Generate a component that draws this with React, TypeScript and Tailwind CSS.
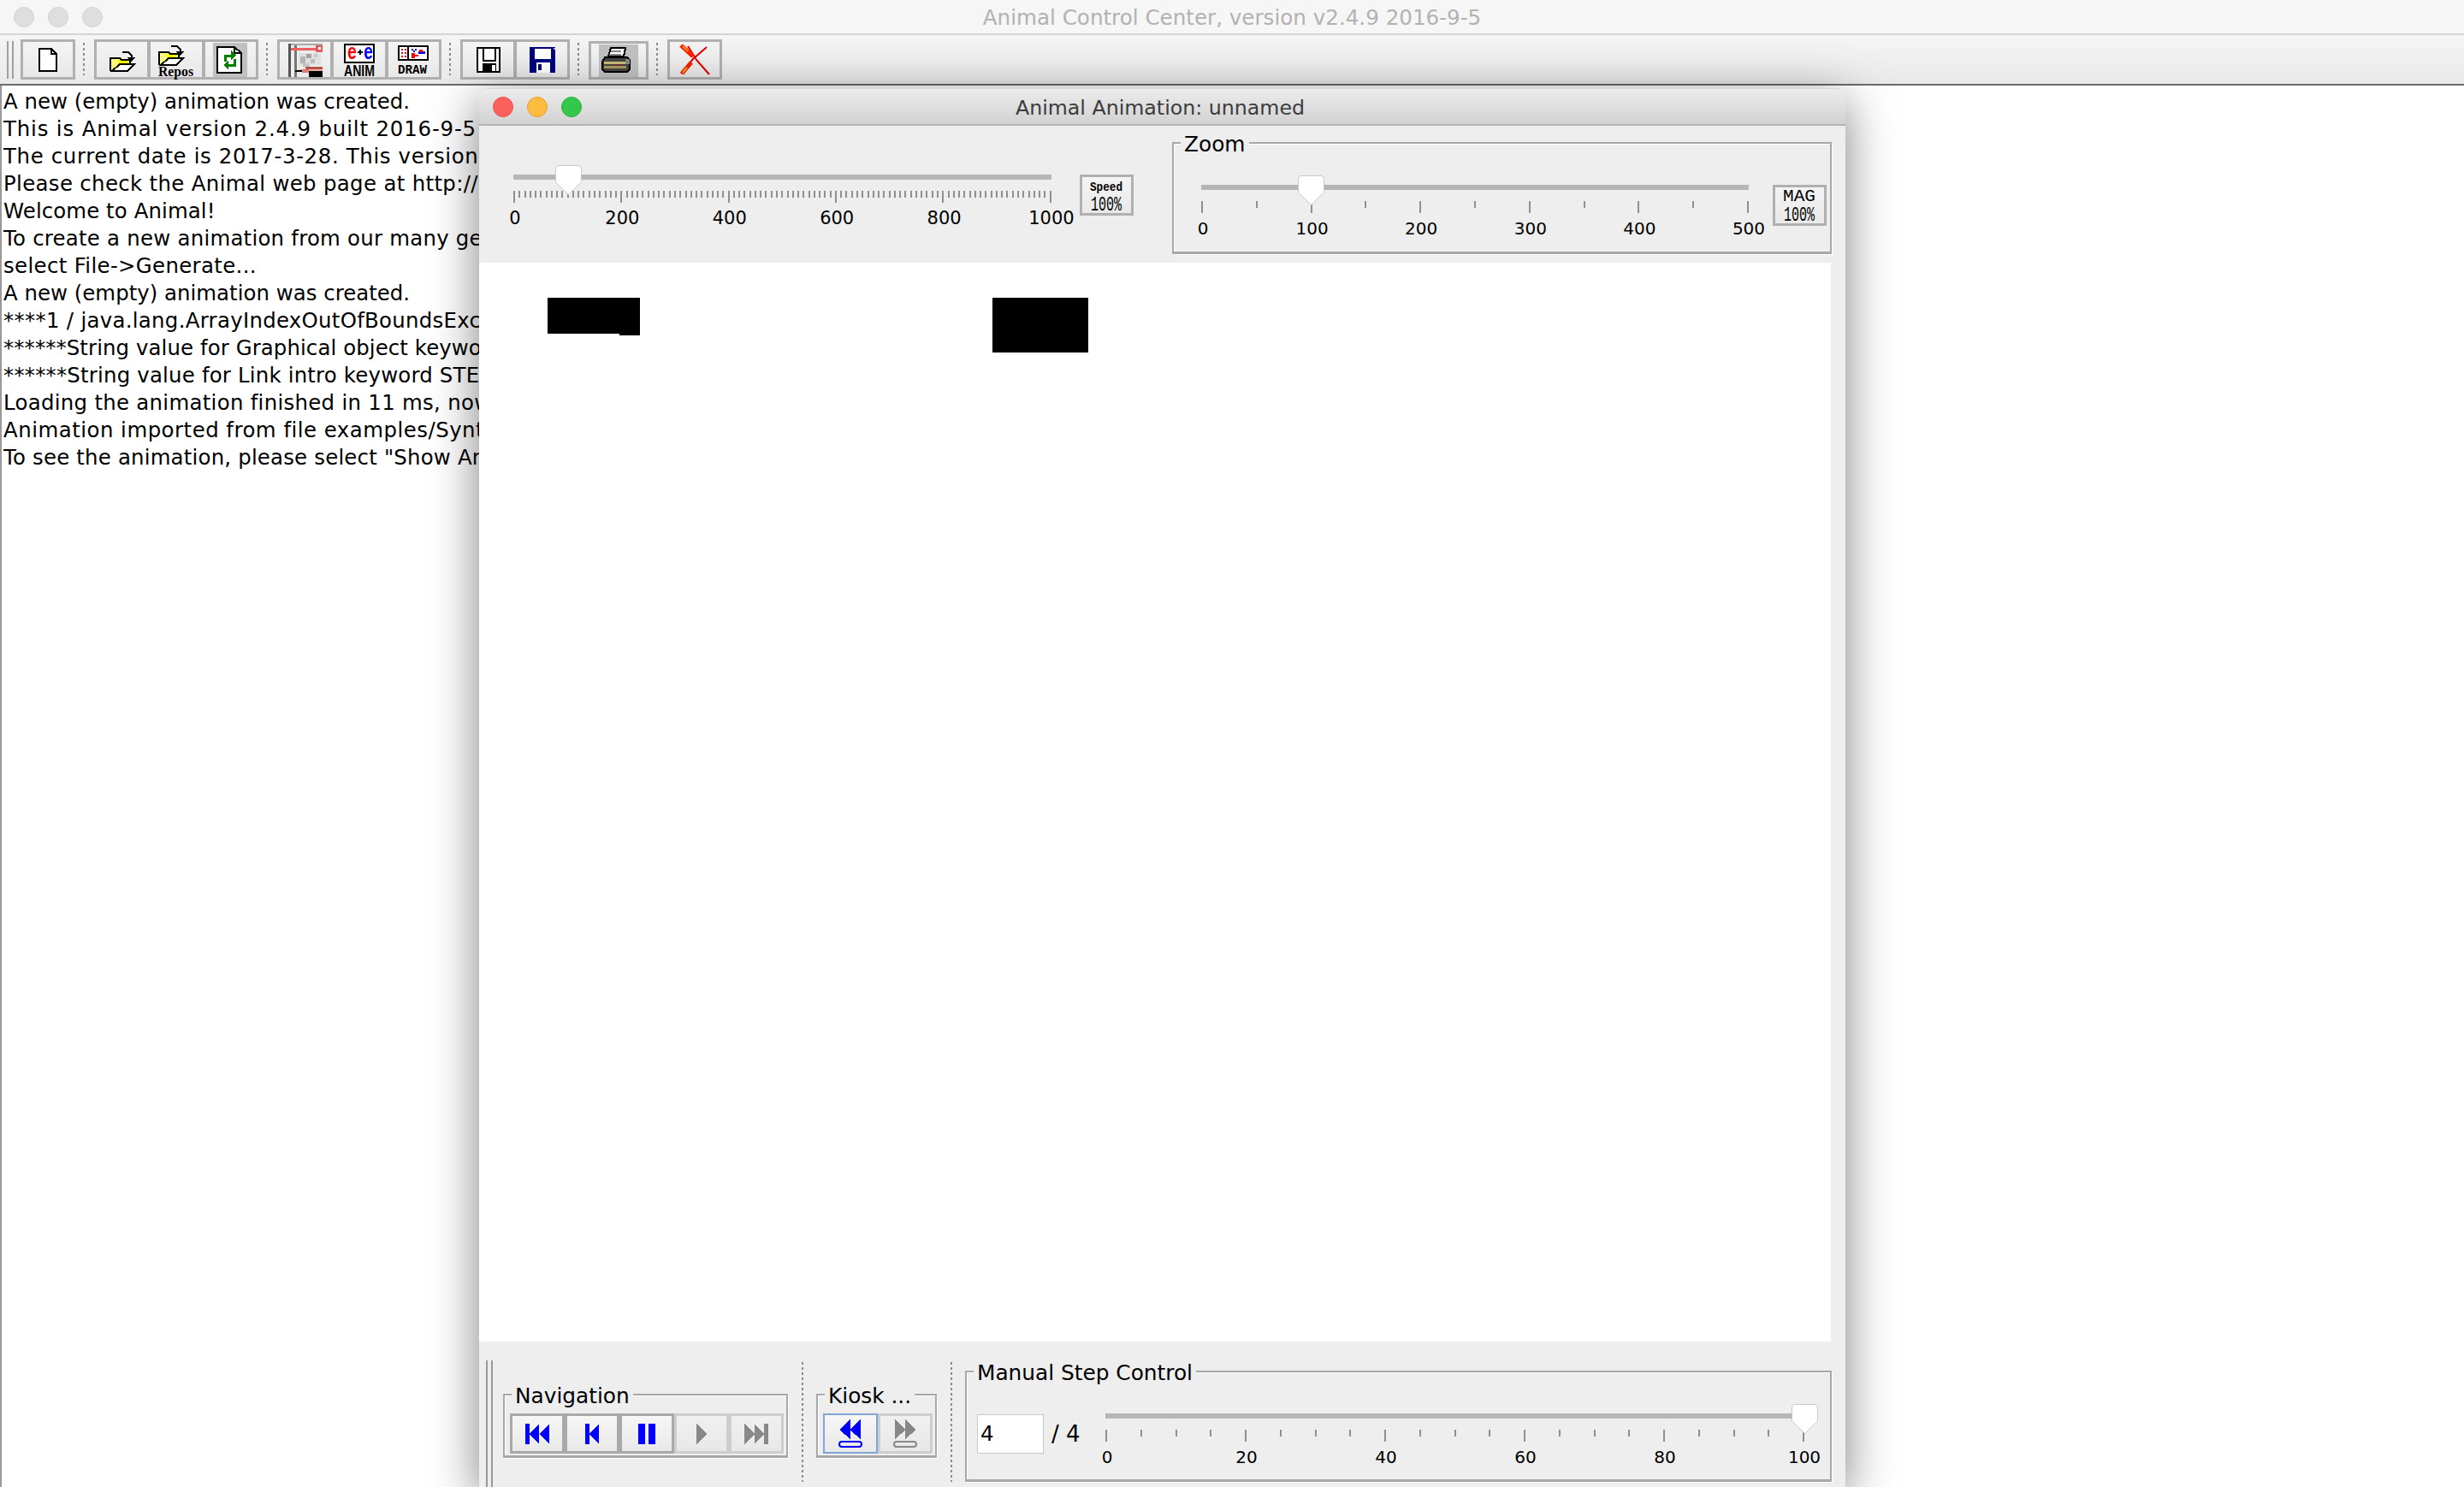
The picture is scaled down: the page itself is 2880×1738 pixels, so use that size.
import type { ReactNode } from 'react'

const logLines = [
  { text: 'A new (empty) animation was created.', tracking: 'tracking-[0.03px]' },
  { text: 'This is Animal version 2.4.9 built 2016-9-5', tracking: 'tracking-[0.85px]' },
  { text: 'The current date is 2017-3-28. This version', tracking: 'tracking-[0.65px]' },
  { text: 'Please check the Animal web page at http://', tracking: 'tracking-[0.35px]' },
  { text: 'Welcome to Animal!', tracking: 'tracking-[0.1px]' },
  { text: 'To create a new animation from our many generators', tracking: 'tracking-[0.25px]' },
  { text: 'select File->Generate...', tracking: 'tracking-[0.35px]' },
  { text: 'A new (empty) animation was created.', tracking: 'tracking-[0.03px]' },
  { text: '****1 / java.lang.ArrayIndexOutOfBoundsException', tracking: 'tracking-[0.3px]' },
  { text: '******String value for Graphical object keyword', tracking: 'tracking-[0.1px]' },
  { text: '******String value for Link intro keyword STEP', tracking: 'tracking-[0.2px]' },
  { text: 'Loading the animation finished in 11 ms, now', tracking: 'tracking-[0.3px]' },
  { text: 'Animation imported from file examples/Syntax', tracking: 'tracking-[0.5px]' },
  { text: 'To see the animation, please select "Show Animation"', tracking: 'tracking-[0.2px]' },
]

function Px({ w, h, className = '', children }: { w: number; h: number; className?: string; children: ReactNode }) {
  return (
    <svg width={w} height={h} viewBox={`0 0 ${w} ${h}`} shapeRendering="crispEdges" className={`overflow-visible ${className}`}>
      {children}
    </svg>
  )
}

function Dither() {
  return (
    <defs>
      <pattern id="yellowDither" width="4" height="4" patternUnits="userSpaceOnUse">
        <rect width="4" height="4" fill="#ffff00" />
        <rect width="2" height="2" fill="#ffffff" />
        <rect x="2" y="2" width="2" height="2" fill="#ffffff" />
      </pattern>
    </defs>
  )
}

function Folder() {
  return (
    <g>
      <path d="M15 5H22L26 9V12" fill="none" stroke="#000" strokeWidth="2" />
      <polygon points="21,11 30,11 25,16" fill="#000" />
      <polygon points="2,13 12,13 14,15 25,15 25,18 12,18 3,26 2,26" fill="url(#yellowDither)" />
      <polygon points="10,14 14,15 24,15 24,17 12,19 10,19" fill="#ffff00" />
      <path d="M1 27V12H12L14 14H24V19" fill="none" stroke="#000" strokeWidth="2" />
      <polygon points="3,27 12,19 29,19 21,27" fill="#fff" stroke="#000" strokeWidth="2" />
    </g>
  )
}

function NewDocIcon() {
  return (
    <Px w={22} h={28}>
      <path d="M1 1H15L21 7V27H1Z" fill="#fff" stroke="#000" strokeWidth="2" />
      <path d="M15 1V7H21" fill="none" stroke="#000" strokeWidth="2" />
    </Px>
  )
}

function OpenIcon() {
  return (
    <Px w={30} h={28}>
      <Dither />
      <Folder />
    </Px>
  )
}

function ReposIcon() {
  return (
    <Px w={42} h={42}>
      <Dither />
      <Folder />
      <text x="0" y="40" fontFamily="'Liberation Serif', serif" fontWeight="700" fontSize="16" textLength="41" lengthAdjust="spacingAndGlyphs">
        Repos
      </text>
    </Px>
  )
}

function RefreshIcon() {
  return (
    <Px w={40} h={40} className="bg-[#c0c0c0]">
      <path d="M5 5H25L33 12V35H5Z" fill="#fff" stroke="#000" strokeWidth="2" />
      <path d="M25 5V12H33" fill="none" stroke="#000" strokeWidth="2" />
      <path d="M14 22V15H22" fill="none" stroke="#008000" strokeWidth="3" />
      <polygon points="21,9 27,15 21,20" fill="#008000" />
      <path d="M25 19V26H17" fill="none" stroke="#008000" strokeWidth="3" />
      <polygon points="18,21 12,26 18,32" fill="#008000" />
    </Px>
  )
}

function ImportIcon() {
  return (
    <Px w={40} h={40} className="bg-[#ececec]">
      <rect x="0" y="1" width="3" height="39" fill="#555" />
      <rect x="7" y="1" width="3" height="39" fill="#777" />
      <rect x="3" y="1" width="37" height="2" fill="#aaa" />
      <rect x="3" y="6" width="30" height="3" fill="#f06060" />
      <rect x="32" y="3" width="8" height="8" fill="#e85a5a" />
      <rect x="35" y="5" width="3" height="3" fill="#fff" />
      <rect x="12" y="12" width="26" height="14" fill="#e0e0e0" />
      <rect x="14" y="16" width="6" height="8" fill="#b4b4b4" />
      <rect x="21" y="13" width="6" height="5" fill="#a4a4a4" />
      <rect x="17" y="24" width="8" height="4" fill="#c4c4c4" />
      <rect x="26" y="19" width="5" height="5" fill="#bcbcbc" />
      <rect x="30" y="13" width="4" height="4" fill="#c8c8c8" />
      <rect x="20" y="28" width="20" height="3" fill="#b9544c" />
      <rect x="12" y="31" width="28" height="2" fill="#e8b0a0" />
      <rect x="16" y="31" width="8" height="4" fill="#e07a70" />
      <rect x="24" y="33" width="16" height="7" fill="#000" />
      <rect x="8" y="32" width="8" height="2" fill="#000" />
    </Px>
  )
}

function AnimIcon() {
  return (
    <Px w={36} h={38}>
      <rect x="1" y="1" width="34" height="21" fill="#fff" stroke="#000" strokeWidth="2" />
      <text x="4" y="18" fontFamily="'Liberation Mono', monospace" fontWeight="700" fontSize="26" fill="#ff0000" textLength="11" lengthAdjust="spacingAndGlyphs">
        e
      </text>
      <rect x="16" y="9" width="6" height="2" fill="#000" />
      <rect x="18" y="7" width="2" height="6" fill="#000" />
      <text x="23" y="18" fontFamily="'Liberation Mono', monospace" fontWeight="700" fontSize="26" fill="#0000ff" textLength="11" lengthAdjust="spacingAndGlyphs">
        e
      </text>
      <text x="0" y="38" fontFamily="'Liberation Sans', sans-serif" fontWeight="700" fontSize="19" textLength="36" lengthAdjust="spacingAndGlyphs">
        ANIM
      </text>
    </Px>
  )
}

function DrawIcon() {
  return (
    <Px w={36} h={33}>
      <rect x="1" y="1" width="34" height="16" fill="#fff" stroke="#000" strokeWidth="2" />
      <rect x="11" y="1" width="2" height="16" fill="#000" />
      {[4, 8, 12].map(y => (
        <g key={y}>
          <rect x="4" y={y} width="2" height="2" fill="#ff0000" />
          <rect x="8" y={y} width="2" height="2" fill="#ff0000" />
        </g>
      ))}
      <rect x="16" y="4" width="2" height="2" fill="#0000ff" />
      <rect x="20" y="4" width="2" height="2" fill="#0000ff" />
      <rect x="18" y="6" width="2" height="2" fill="#0000ff" />
      <rect x="24" y="7" width="8" height="3" fill="#0000ff" />
      <rect x="25" y="5" width="4" height="3" fill="#ff0000" />
      <rect x="16" y="9" width="4" height="6" fill="#ff0000" />
      <rect x="20" y="11" width="4" height="2" fill="#ff0000" />
      <text x="0" y="33" fontFamily="'Liberation Mono', monospace" fontWeight="700" fontSize="14" textLength="34" lengthAdjust="spacingAndGlyphs">
        DRAW
      </text>
    </Px>
  )
}

function FloppyBlack() {
  return (
    <Px w={28} h={30}>
      <path d="M1 1H27V29H1Z" fill="#fff" stroke="#000" strokeWidth="2" />
      <rect x="7" y="2" width="2" height="15" fill="#000" />
      <rect x="21" y="2" width="2" height="15" fill="#000" />
      <rect x="7" y="15" width="16" height="2" fill="#000" />
      <rect x="7" y="19" width="16" height="10" fill="#000" />
      <rect x="18" y="21" width="4" height="7" fill="#fff" />
    </Px>
  )
}

function FloppyBlue() {
  return (
    <Px w={30} h={30}>
      <rect width="30" height="30" fill="#000080" />
      <rect x="6" y="2" width="19" height="12" fill="#fff" />
      <rect x="8" y="18" width="16" height="12" fill="#fff" />
      <rect x="10" y="20" width="4" height="7" fill="#000080" />
      <rect x="28" y="1" width="2" height="2" fill="#aaa" />
    </Px>
  )
}

function PrinterIcon() {
  return (
    <Px w={46} h={38} className="bg-[#c0c0c0]">
      <polygon points="11,14 14,4 31,4 29,14" fill="#fff" stroke="#000" strokeWidth="2" />
      <rect x="14" y="7" width="12" height="2" fill="#888" />
      <rect x="12" y="11" width="14" height="2" fill="#888" />
      <polygon points="7,15 33,15 36,18 36,29 33,32 7,32 4,29 4,20" fill="#444" stroke="#000" strokeWidth="2" />
      <rect x="6" y="20" width="28" height="3" fill="#c8b878" />
      <rect x="6" y="25" width="26" height="3" fill="#a89858" />
      <rect x="21" y="23" width="4" height="2" fill="#8b1a1a" />
      <rect x="31" y="17" width="5" height="6" fill="#888" />
    </Px>
  )
}

function CloseIcon() {
  return (
    <svg width="36" height="36" viewBox="0 0 36 36">
      <path d="M35 35L20 18L10 2" fill="none" stroke="#e00000" strokeWidth="2" />
      <path d="M2 34L16 17L32 3" fill="none" stroke="#e00000" strokeWidth="2" />
      <path d="M2 1L16 14" fill="none" stroke="#ff2000" strokeWidth="5" />
      <path d="M4 2L10 8" fill="none" stroke="#ff9020" strokeWidth="2" />
      <path d="M3 34L14 21" fill="none" stroke="#f02000" strokeWidth="5" />
      <path d="M4 33L9 27" fill="none" stroke="#ffa020" strokeWidth="2" />
    </svg>
  )
}

function Dots({ className }: { className: string }) {
  return (
    <div
      className={`w-[2px] shrink-0 bg-[repeating-linear-gradient(to_bottom,#8c8c8c_0,#8c8c8c_3px,transparent_3px,transparent_6px)] ${className}`}
    />
  )
}

function ToolButton({ children }: { children?: ReactNode }) {
  return (
    <div className="flex flex-1 items-center justify-center bg-gradient-to-b from-[#f4f4f4] to-[#e8e8e8] border-l-4 border-[#b0b0b0] first:border-l-0">
      {children}
    </div>
  )
}

function ToolGroup({ w, h = 'h-[47px]', children }: { w: string; h?: string; children: ReactNode }) {
  return <div className={`flex shrink-0 border-[3px] border-[#b0b0b0] ${w} ${h}`}>{children}</div>
}

function Thumb({ className }: { className: string }) {
  return (
    <svg width="31" height="35" viewBox="0 0 31 35" className={`absolute ${className}`}>
      <path
        d="M4 .5H27A3.5 3.5 0 0 1 30.5 4V20L15.5 34.5L.5 20V4A3.5 3.5 0 0 1 4 .5Z"
        fill="#fff"
        stroke="#c9c9c9"
      />
    </svg>
  )
}

function Slider({
  w,
  thumb,
  tickCount,
  majorEvery,
  labels,
  labelSize = 'text-[20px]',
}: {
  w: string
  thumb: string
  tickCount: number
  majorEvery: number
  labels: string[]
  labelSize?: string
}) {
  return (
    <div className={`relative shrink-0 ${w}`}>
      <div className="h-[6px] bg-[#b6b6b6]" />
      <Thumb className={`top-[-11px] ${thumb}`} />
      <div className="mt-[13px] flex h-[14px] items-start justify-between">
        {Array.from({ length: tickCount }, (_, i) => (
          <div key={i} className={i % majorEvery === 0 ? 'h-[14px] w-[2px] bg-[#909090]' : 'h-[8px] w-[2px] bg-[#909090]'} />
        ))}
      </div>
      <div className={`ml-[2px] mt-[8px] flex justify-between leading-[20px] text-black ${labelSize}`}>
        {labels.map(label => (
          <div key={label} className="flex w-0 justify-center">
            {label}
          </div>
        ))}
      </div>
    </div>
  )
}

function Group({ title, className, children }: { title: string; className: string; children: ReactNode }) {
  return (
    <div
      className={`relative shrink-0 border-2 border-b-[3px] border-[#a8a8a8] shadow-[inset_1px_1px_0_#fff,1px_1px_0_#fff] ${className}`}
    >
      <span className="absolute left-[8px] top-[-15px] whitespace-nowrap bg-[#eeeeee] px-[4px] text-[24.8px] leading-[32px] text-black">
        {title}
      </span>
      {children}
    </div>
  )
}

function BadgeBox({
  top,
  bottom,
  topSize,
  topWeight,
  topY,
}: {
  top: string
  bottom: string
  topSize: number
  topWeight: number
  topY: number
}) {
  return (
    <div className="flex h-[48px] w-[63px] shrink-0 items-center justify-center border-[3px] border-[#b0b0b0] bg-gradient-to-b from-[#f4f4f4] to-[#e9e9e9]">
      <svg width="42" height="40" viewBox="0 0 42 40" className="overflow-visible">
        <text x="1" y={topY} fontFamily="'Liberation Mono', monospace" fontWeight={topWeight} fontSize={topSize} textLength="38" lengthAdjust="spacingAndGlyphs">
          {top}
        </text>
        <text x="2" y="38" fontFamily="'Liberation Mono', monospace" fontSize="23" textLength="36" lengthAdjust="spacingAndGlyphs">
          {bottom}
        </text>
      </svg>
    </div>
  )
}

const navEnabled = 'border-[#a9a9a9] from-[#f6f6f6] to-[#e9e9e9]'
const navDisabled = 'border-[#cdcdcd] from-[#f0f0f0] to-[#e8e8e8]'

function NavButton({ state, children }: { state: string; children: ReactNode }) {
  return (
    <div className={`flex h-[47px] w-[64px] shrink-0 items-center justify-center border-[3px] bg-gradient-to-b ${state}`}>
      {children}
    </div>
  )
}

function Glyph({ w, color, shapes }: { w: number; color: string; shapes: string[] }) {
  return (
    <Px w={w} h={24}>
      {shapes.map(points => (
        <polygon key={points} points={points} fill={color} />
      ))}
    </Px>
  )
}

function KioskGlyph({ color, flip }: { color: string; flip?: boolean }) {
  return (
    <svg width="28" height="33" viewBox="0 0 28 33" className={flip ? '-scale-x-100' : ''}>
      <g shapeRendering="crispEdges">
        <polygon points="1,12 14,0 14,23" fill={color} />
        <polygon points="13,12 26,0 26,23" fill={color} />
      </g>
      <rect x="1" y="26" width="26" height="6" rx="3" fill="none" stroke={color} strokeWidth="2" />
    </svg>
  )
}

function Traffic({ className }: { className: string }) {
  return <div className={`h-[24px] w-[24px] rounded-full border ${className}`} />
}

function AnimationWindow() {
  return (
    <div className="absolute bottom-0 left-[560px] top-[103px] flex w-[1597px] flex-col overflow-hidden rounded-t-[10px] bg-[#eeeeee]">
      <div className="grid h-[44px] shrink-0 grid-cols-[1fr_auto_1fr] items-center border-b-2 border-t border-b-[#b4b4b4] border-t-[#d8d8d8] bg-gradient-to-b from-[#ececec] to-[#d2d2d2] text-[23.7px] text-[#3c3c3c]">
        <div className="flex gap-[16px] pl-[16px]">
          <Traffic className="border-[#e5534b] bg-[#fc605c]" />
          <Traffic className="border-[#e0a030] bg-[#fdbc40]" />
          <Traffic className="border-[#2cab3a] bg-[#34c84a]" />
        </div>
        <div className="-ml-[5px] pt-[5px]">Animal Animation: unnamed</div>
        <div />
      </div>

      <div className="flex h-[160px] shrink-0 items-start pl-[40px]">
        <div className="mt-[57px]">
          <Slider
            w="w-[629px]"
            thumb="left-[49px]"
            tickCount={101}
            majorEvery={20}
            labels={['0', '200', '400', '600', '800', '1000']}
            labelSize="text-[21px]"
          />
        </div>
        <div className="ml-[33px] mt-[57px]">
          <BadgeBox top="Speed" bottom="100%" topSize={15} topWeight={700} topY={15} />
        </div>
        <Group title="Zoom" className="ml-[45px] mt-[19px] flex h-[131px] w-[771px] items-start pl-[32px] pt-[48px]">
          <Slider
            w="w-[640px]"
            thumb="left-[113px]"
            tickCount={11}
            majorEvery={2}
            labels={['0', '100', '200', '300', '400', '500']}
          />
          <div className="ml-[28px]">
            <BadgeBox top="MAG" bottom="100%" topSize={20} topWeight={400} topY={15} />
          </div>
        </Group>
      </div>

      <div className="mr-[17px] flex-1 bg-white">
        <div className="relative h-full">
          <div className="absolute left-[80px] top-[41px] h-[42px] w-[108px] bg-black" />
          <div className="absolute left-[164px] top-[83px] h-[2px] w-[24px] bg-black" />
          <div className="absolute left-[600px] top-[41px] h-[64px] w-[112px] bg-black" />
        </div>
      </div>

      <div className="flex h-[170px] shrink-0 items-start pl-[8px]">
        <div className="mt-[22px] flex h-[148px] w-[8px] shrink-0 justify-between">
          <div className="w-[2px] bg-[#999999]" />
          <div className="w-[2px] bg-[#999999]" />
        </div>
        <Group title="Navigation" className="ml-[12px] mt-[61px] flex h-[75px] w-[333px] items-start pl-[6px] pt-[21px]">
          <NavButton state={navEnabled}>
            <Glyph w={28} color="#0000ff" shapes={['0,0 5,0 5,24 0,24', '5,12 16,0 16,24', '16,12 28,0 28,24']} />
          </NavButton>
          <NavButton state={navEnabled}>
            <Glyph w={16} color="#0000ff" shapes={['0,0 5,0 5,24 0,24', '5,12 16,0 16,24']} />
          </NavButton>
          <NavButton state={navEnabled}>
            <Glyph w={20} color="#0000ff" shapes={['0,0 8,0 8,24 0,24', '12,0 20,0 20,24 12,24']} />
          </NavButton>
          <NavButton state={navDisabled}>
            <Glyph w={12} color="#888888" shapes={['0,0 12,12 0,24']} />
          </NavButton>
          <NavButton state={navDisabled}>
            <Glyph w={28} color="#888888" shapes={['0,0 12,12 0,24', '12,0 23,12 12,24', '23,0 28,0 28,24 23,24']} />
          </NavButton>
        </Group>
        <Dots className="ml-[16px] mt-[24px] h-[140px]" />
        <Group title="Kiosk ..." className="ml-[15px] mt-[61px] flex h-[75px] w-[141px] items-start pl-[6px] pt-[21px]">
          <div className="flex h-[47px] w-[64px] shrink-0 items-center justify-center border-2 border-[#7fa6d4] bg-gradient-to-b from-[#f6f6f6] to-[#e9e9e9]">
            <KioskGlyph color="#0000ff" />
          </div>
          <NavButton state={navDisabled}>
            <KioskGlyph color="#888888" flip />
          </NavButton>
        </Group>
        <Dots className="ml-[16px] mt-[24px] h-[140px]" />
        <Group title="Manual Step Control" className="ml-[15px] mt-[34px] flex h-[130px] w-[1013px] items-start pl-[12px] pt-[49px]">
          <div className="h-[46px] w-[78px] shrink-0 border border-[#c8c8c8] bg-white pl-[3px] text-[24.5px] leading-[44px] text-black">
            4
          </div>
          <div className="ml-[9px] w-[63px] shrink-0 text-[26px] leading-[46px] text-black">/ 4</div>
          <div className="-mt-[1px]">
            <Slider
              w="w-[817px]"
              thumb="left-[802px]"
              tickCount={21}
              majorEvery={4}
              labels={['0', '20', '40', '60', '80', '100']}
            />
          </div>
        </Group>
      </div>
    </div>
  )
}

export default function App() {
  return (
    <div className="relative flex h-[1738px] w-[2880px] flex-col overflow-hidden bg-white font-['DejaVu_Sans',sans-serif]">
      <div className="grid h-[41px] shrink-0 grid-cols-[1fr_auto_1fr] items-center border-b-2 border-[#d4d4d4] bg-[#f6f6f6] text-[24.6px] text-[#b2b2b2]">
        <div className="flex gap-[16px] pl-[16px]">
          <Traffic className="border-[#d2d2d2] bg-[#dedede]" />
          <Traffic className="border-[#d2d2d2] bg-[#dedede]" />
          <Traffic className="border-[#d2d2d2] bg-[#dedede]" />
        </div>
        <div className="pt-[3px]">Animal Control Center, version v2.4.9 2016-9-5</div>
        <div />
      </div>

      <div className="flex h-[59px] shrink-0 items-start border-b-2 border-[#6a6a6a] bg-gradient-to-b from-[#f5f5f5] to-[#e9e9e9] pl-[8px] pt-[5px]">
        <div className="mt-[2px] flex h-[44px] w-[8px] shrink-0 justify-between">
          <div className="w-[2px] bg-[#a0a0a0]" />
          <div className="w-[2px] bg-[#a0a0a0]" />
        </div>
        <div className="ml-[8px]">
          <ToolGroup w="w-[64px]">
            <ToolButton>
              <NewDocIcon />
            </ToolButton>
          </ToolGroup>
        </div>
        <Dots className="ml-[9px] mr-[11px] mt-[4px] h-[38px]" />
        <ToolGroup w="w-[192px]">
          <ToolButton>
            <OpenIcon />
          </ToolButton>
          <ToolButton>
            <ReposIcon />
          </ToolButton>
          <ToolButton>
            <RefreshIcon />
          </ToolButton>
        </ToolGroup>
        <Dots className="ml-[9px] mr-[11px] mt-[4px] h-[38px]" />
        <ToolGroup w="w-[192px]">
          <ToolButton>
            <ImportIcon />
          </ToolButton>
          <ToolButton>
            <AnimIcon />
          </ToolButton>
          <ToolButton>
            <DrawIcon />
          </ToolButton>
        </ToolGroup>
        <Dots className="ml-[9px] mr-[11px] mt-[4px] h-[38px]" />
        <ToolGroup w="w-[128px]">
          <ToolButton>
            <FloppyBlack />
          </ToolButton>
          <ToolButton>
            <FloppyBlue />
          </ToolButton>
        </ToolGroup>
        <Dots className="ml-[9px] mr-[11px] mt-[4px] h-[38px]" />
        <div className="mt-[2px]">
          <ToolGroup w="w-[70px]" h="h-[45px]">
            <ToolButton>
              <PrinterIcon />
            </ToolButton>
          </ToolGroup>
        </div>
        <Dots className="ml-[9px] mr-[11px] mt-[4px] h-[38px]" />
        <ToolGroup w="w-[64px]">
          <ToolButton>
            <CloseIcon />
          </ToolButton>
        </ToolGroup>
      </div>

      <div className="flex-1 border-l-2 border-[#9a9a9a] pl-[2px] pt-[3px] text-[24.4px] leading-[32px] text-black">
        {logLines.map((line, i) => (
          <div key={i} className={`whitespace-nowrap ${line.tracking}`}>
            {line.text}
          </div>
        ))}
      </div>

      <div className="pointer-events-none absolute bottom-0 left-[560px] top-[103px] w-[1597px] rounded-t-[10px] shadow-[0_14px_56px_rgba(0,0,0,0.5)]" />
      <AnimationWindow />
    </div>
  )
}
